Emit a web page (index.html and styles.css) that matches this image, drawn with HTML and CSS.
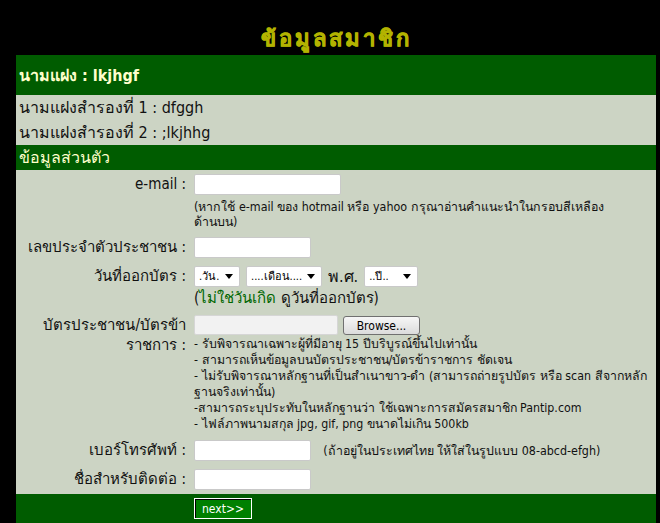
FILE: index.html
```html
<!DOCTYPE html>
<html lang="th">

<head>
  <meta charset="UTF-8">
  <title>ข้อมูลสมาชิก</title>
  <link rel="stylesheet" href="styles.css">
</head>

<body>
  <div class="wrap">
    <div class="title">ข้อมูลสมาชิก</div>
    <table class="member">
      <tr class="head">
        <td colspan="2">นามแฝง : lkjhgf</td>
      </tr>
      <tr class="alias">
        <td colspan="2">นามแฝงสำรองที่ 1 : dfggh</td>
      </tr>
      <tr class="alias">
        <td colspan="2">นามแฝงสำรองที่ 2 : ;lkjhhg</td>
      </tr>
      <tr class="section">
        <td colspan="2">ข้อมูลส่วนตัว</td>
      </tr>
      <tr class="row first">
        <td class="label">e-mail :</td>
        <td class="field">
          <input type="text" class="txt email">
          <div class="note">(หากใช้ e-mail ของ hotmail หรือ yahoo กรุณาอ่านคำแนะนำในกรอบสีเหลือง<br>ด้านบน)</div>
        </td>
      </tr>
      <tr class="row">
        <td class="label">เลขประจำตัวประชาชน :</td>
        <td class="field"><input type="text" class="txt"></td>
      </tr>
      <tr class="row">
        <td class="label">วันที่ออกบัตร :</td>
        <td class="field">
          <div class="dates">
            <select class="sel day"><option>.วัน.</option></select>
            <select class="sel month"><option>....เดือน....</option></select>
            <span class="be">พ.ศ.</span>
            <select class="sel year"><option>..ปี..</option></select>
          </div>
          <div class="hint">(<span class="green">ไม่ใช่วันเกิด</span> ดูวันที่ออกบัตร)</div>
        </td>
      </tr>
      <tr class="row">
        <td class="label">บัตรประชาชน/บัตรข้า<br>ราชการ :</td>
        <td class="field">
          <div class="file">
            <input type="text" class="txt path" readonly>
            <button type="button" class="browse">Browse...</button>
          </div>
          <div class="note rules">
            - รับพิจารณาเฉพาะผู้ที่มีอายุ 15 ปีบริบูรณ์ขึ้นไปเท่านั้น<br>
            - สามารถเห็นข้อมูลบนบัตรประชาชน/บัตรข้าราชการ ชัดเจน<br>
            - ไม่รับพิจารณาหลักฐานที่เป็นสำเนาขาว-ดำ (สามารถถ่ายรูปบัตร หรือ scan สีจากหลัก<br>ฐานจริงเท่านั้น)<br>
            -สามารถระบุประทับในหลักฐานว่า ใช้เฉพาะการสมัครสมาชิก Pantip.com<br>
            - ไฟล์ภาพนามสกุล jpg, gif, png ขนาดไม่เกิน 500kb
          </div>
        </td>
      </tr>
      <tr class="row">
        <td class="label">เบอร์โทรศัพท์ :</td>
        <td class="field">
          <input type="text" class="txt">
          <span class="note inline">(ถ้าอยู่ในประเทศไทย ให้ใส่ในรูปแบบ 08-abcd-efgh)</span>
        </td>
      </tr>
      <tr class="row">
        <td class="label">ชื่อสำหรับติดต่อ :</td>
        <td class="field"><input type="text" class="txt"></td>
      </tr>
      <tr class="foot">
        <td></td>
        <td class="field"><button type="button" class="next">next&gt;&gt;</button></td>
      </tr>
    </table>
  </div>
</body>

</html>
```

FILE: styles.css
```css
html {
  background-color: #000;
}

body {
  margin: 0;
  font-family: Tahoma, "DejaVu Sans Condensed", "DejaVu Sans", sans-serif;
  font-size: 15px;
  color: #111;
}

.wrap {
  width: 640px;
  margin-left: 16px;
}

/* หัวเรื่อง */
.title {
  height: 55px;
  box-sizing: border-box;
  padding-top: 28px;
  line-height: 22px;
  text-align: center;
  color: #b3b300;
  font-size: 22px;
  font-weight: 900;
  letter-spacing: 3px;
  -webkit-text-stroke: 0.7px #b3b300;
}

.member {
  width: 640px;
  border-collapse: collapse;
  border-spacing: 0;
}

.member td {
  padding: 0;
  vertical-align: top;
}

.head td {
  height: 40px;
  vertical-align: middle;
  padding-left: 3px;
  background: #005c00;
  color: #ffffcc;
  font-weight: bold;
  font-size: 16px;
}

.alias td {
  height: 25px;
  vertical-align: middle;
  padding-left: 3px;
  background: #ccd4c4;
  font-size: 16px;
}

.section td {
  height: 25px;
  vertical-align: middle;
  padding-left: 3px;
  background: #005c00;
  color: #ffffcc;
  font-size: 16px;
}

/* ฟอร์ม */
.row td {
  background: #ccd4c4;
  padding-top: 4px;
  padding-bottom: 4px;
}

.label {
  width: 170px;
  padding-right: 4px !important;
  text-align: right;
  line-height: 20px;
}

.field {
  padding-left: 4px !important;
  text-align: left;
}

.txt {
  box-sizing: border-box;
  width: 117px;
  height: 21px;
  margin: 0;
  padding: 1px 3px;
  border: 1px solid #c9c9c9;
  border-radius: 2px;
  background: #fff;
  vertical-align: top;
  font: inherit;
}

.email {
  width: 147px;
}

.note {
  font-size: 12.4px;
  line-height: 15px;
  margin-top: 4px;
}

.note.inline {
  display: inline-block;
  margin: 0 0 0 8px;
  line-height: 21px;
}

.dates {
  display: flex;
  align-items: center;
  height: 21px;
}

.sel {
  appearance: none;
  box-sizing: border-box;
  height: 21px;
  margin: 0 6px 0 0;
  padding: 0 16px 0 4px;
  border: 1px solid #c9c9c9;
  border-radius: 2px;
  background: #fff url("data:image/svg+xml,%3Csvg xmlns='http://www.w3.org/2000/svg' width='8' height='5'%3E%3Cpath d='M0 0h8L4 5z' fill='%23000'/%3E%3C/svg%3E") no-repeat right 6px center;
  font-family: inherit;
  font-size: 11px;
  color: #000;
}

.day {
  width: 46px;
}

.month {
  width: 76px;
}

.year {
  width: 54px;
}

.be {
  margin-right: 6px;
  font-size: 16px;
}

.hint {
  margin-top: 2px;
  line-height: 18px;
  font-size: 15px;
}

.green {
  color: #006600;
}

.file {
  display: flex;
  gap: 5px;
  height: 20px;
}

.path {
  width: 144px;
  height: 20px;
  background: #f2f2f2;
  border-color: #d6d6d6;
}

.browse {
  width: 77px;
  height: 19px;
  margin-top: 1px;
  padding: 0;
  border: 1px solid #707070;
  border-radius: 3px;
  background: linear-gradient(#f6f6f6, #dcdcdc);
  font-family: inherit;
  font-size: 12px;
  color: #000;
}

.rules {
  margin-top: 1px;
  line-height: 16px;
  font-size: 12.3px;
}

.foot td {
  background: #005c00;
  padding-top: 4px;
  height: 26px;
}

.next {
  width: 58px;
  height: 21px;
  padding: 0;
  border: 1px solid #fff;
  box-shadow: inset 1px 1px 0 #000;
  background: #008000;
  color: #fff;
  font-family: inherit;
  font-size: 12px;
}
```
